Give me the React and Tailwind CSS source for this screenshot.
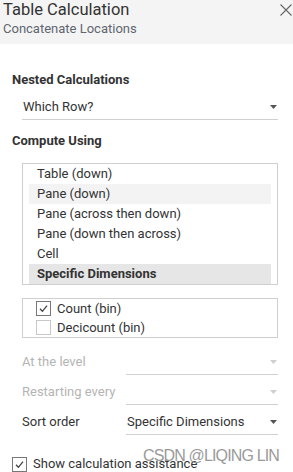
import React from "react";

const font = { fontFamily: "Roboto, 'Liberation Sans', Arial, sans-serif" };

function Arrow({ disabled }) {
  return (
    <svg width="7" height="4" viewBox="0 0 7 4" className="shrink-0">
      <path d="M0 0 L7 0 L3.5 4 Z" fill={disabled ? "#cfcfcf" : "#555"} />
    </svg>
  );
}

function Check({ checked }) {
  return (
    <div
      className={
        "w-[15px] h-[15px] border bg-white flex items-center justify-center shrink-0 " +
        (checked ? "border-[#777]" : "border-[#c8c8c8]")
      }
    >
      {checked && (
        <svg width="11" height="11" viewBox="0 0 11 11">
          <path d="M2 5.8 L4.4 8.3 L9 2.6" fill="none" stroke="#444" strokeWidth="1.3" />
        </svg>
      )}
    </div>
  );
}

function DropRow({ label, value, disabled }) {
  return (
    <div className="flex h-[22px] pl-[22px] pr-[15px]">
      <div
        className={
          "w-[104px] text-[13px] leading-[18px] " +
          (disabled ? "text-[#b4b4b4]" : "text-[#333]")
        }
      >
        {label}
      </div>
      <div className="flex-1 flex justify-between items-start border-b border-[#d0d0d0] h-[22px]">
        <span className="text-[13px] leading-[18px] text-[#333] pl-px">{value}</span>
        <div className="mt-[7px] mr-[1px]">
          <Arrow disabled={disabled} />
        </div>
      </div>
    </div>
  );
}

export default function App() {
  const items = [
    { t: "Table (down)" },
    { t: "Pane (down)", bg: "bg-[#f3f3f3]" },
    { t: "Pane (across then down)" },
    { t: "Pane (down then across)" },
    { t: "Cell" },
    { t: "Specific Dimensions", bg: "bg-[#e6e6e6]", bold: true },
  ];
  return (
    <div className="w-[293px] h-[472px] bg-white relative overflow-hidden" style={font}>
      <div className="h-[44px] bg-[#f4f4f4] pl-[3px] relative">
        <div className="text-[16.5px] leading-[20px] text-[#333]">Table Calculation</div>
        <div className="text-[13px] leading-[16px] text-[#5f6670] mt-px">Concatenate Locations</div>
        <svg width="12" height="12" viewBox="0 0 12 12" className="absolute right-[1px] top-[4px]">
          <path d="M0.5 0.5 L11.5 11.5 M11.5 0.5 L0.5 11.5" stroke="#666" strokeWidth="1.1" />
        </svg>
      </div>

      <div className="mt-[27px] pl-[12px] text-[13px] leading-[18px] font-bold text-[#333]">
        Nested Calculations
      </div>
      <div className="mt-[9px] ml-[22px] mr-[15px] h-[22px] border-b border-[#d0d0d0] flex justify-between items-start">
        <span className="text-[13px] leading-[18px] text-[#333] pl-px">Which Row?</span>
        <div className="mt-[7px] mr-[1px]">
          <Arrow />
        </div>
      </div>

      <div className="mt-[12px] pl-[12px] text-[13px] leading-[18px] font-bold text-[#333]">
        Compute Using
      </div>

      <div className="mt-[13px] ml-[22px] mr-[15px] border border-[#cfcfcf] px-[6px]">
        {items.map((it) => (
          <div
            key={it.t}
            className={
              "h-[20px] pl-[8px] text-[13px] leading-[20px] text-[#333] " +
              (it.bg || "") +
              (it.bold ? " font-bold" : "")
            }
          >
            {it.t}
          </div>
        ))}
      </div>

      <div className="mt-[13px] ml-[22px] mr-[15px] border border-[#cfcfcf] pl-[13px]">
        <div className="h-[19px] flex items-center gap-[6px]">
          <Check checked />
          <span className="text-[13px] leading-[18px] text-[#333]">Count (bin)</span>
        </div>
        <div className="h-[19px] flex items-center gap-[6px]">
          <Check />
          <span className="text-[13px] leading-[18px] text-[#333]">Decicount (bin)</span>
        </div>
      </div>

      <div className="mt-[15px] flex flex-col gap-[8px]">
        <DropRow label="At the level" value="" disabled />
        <DropRow label="Restarting every" value="" disabled />
        <DropRow label="Sort order" value="Specific Dimensions" />
      </div>

      <div className="mt-[21px] pl-[12px] flex items-center gap-[6px] h-[16px]">
        <Check checked />
        <span className="text-[13px] leading-[18px] text-[#333]">Show calculation assistance</span>
      </div>

      <div
        className="absolute left-[143px] top-[446px] text-[16px] leading-[20px] text-[#9a9a9a] tracking-[-0.85px] whitespace-nowrap"
        style={{ fontFamily: "'Liberation Sans', Arial, sans-serif" }}
      >
        CSDN @LIQING LIN
      </div>
    </div>
  );
}
